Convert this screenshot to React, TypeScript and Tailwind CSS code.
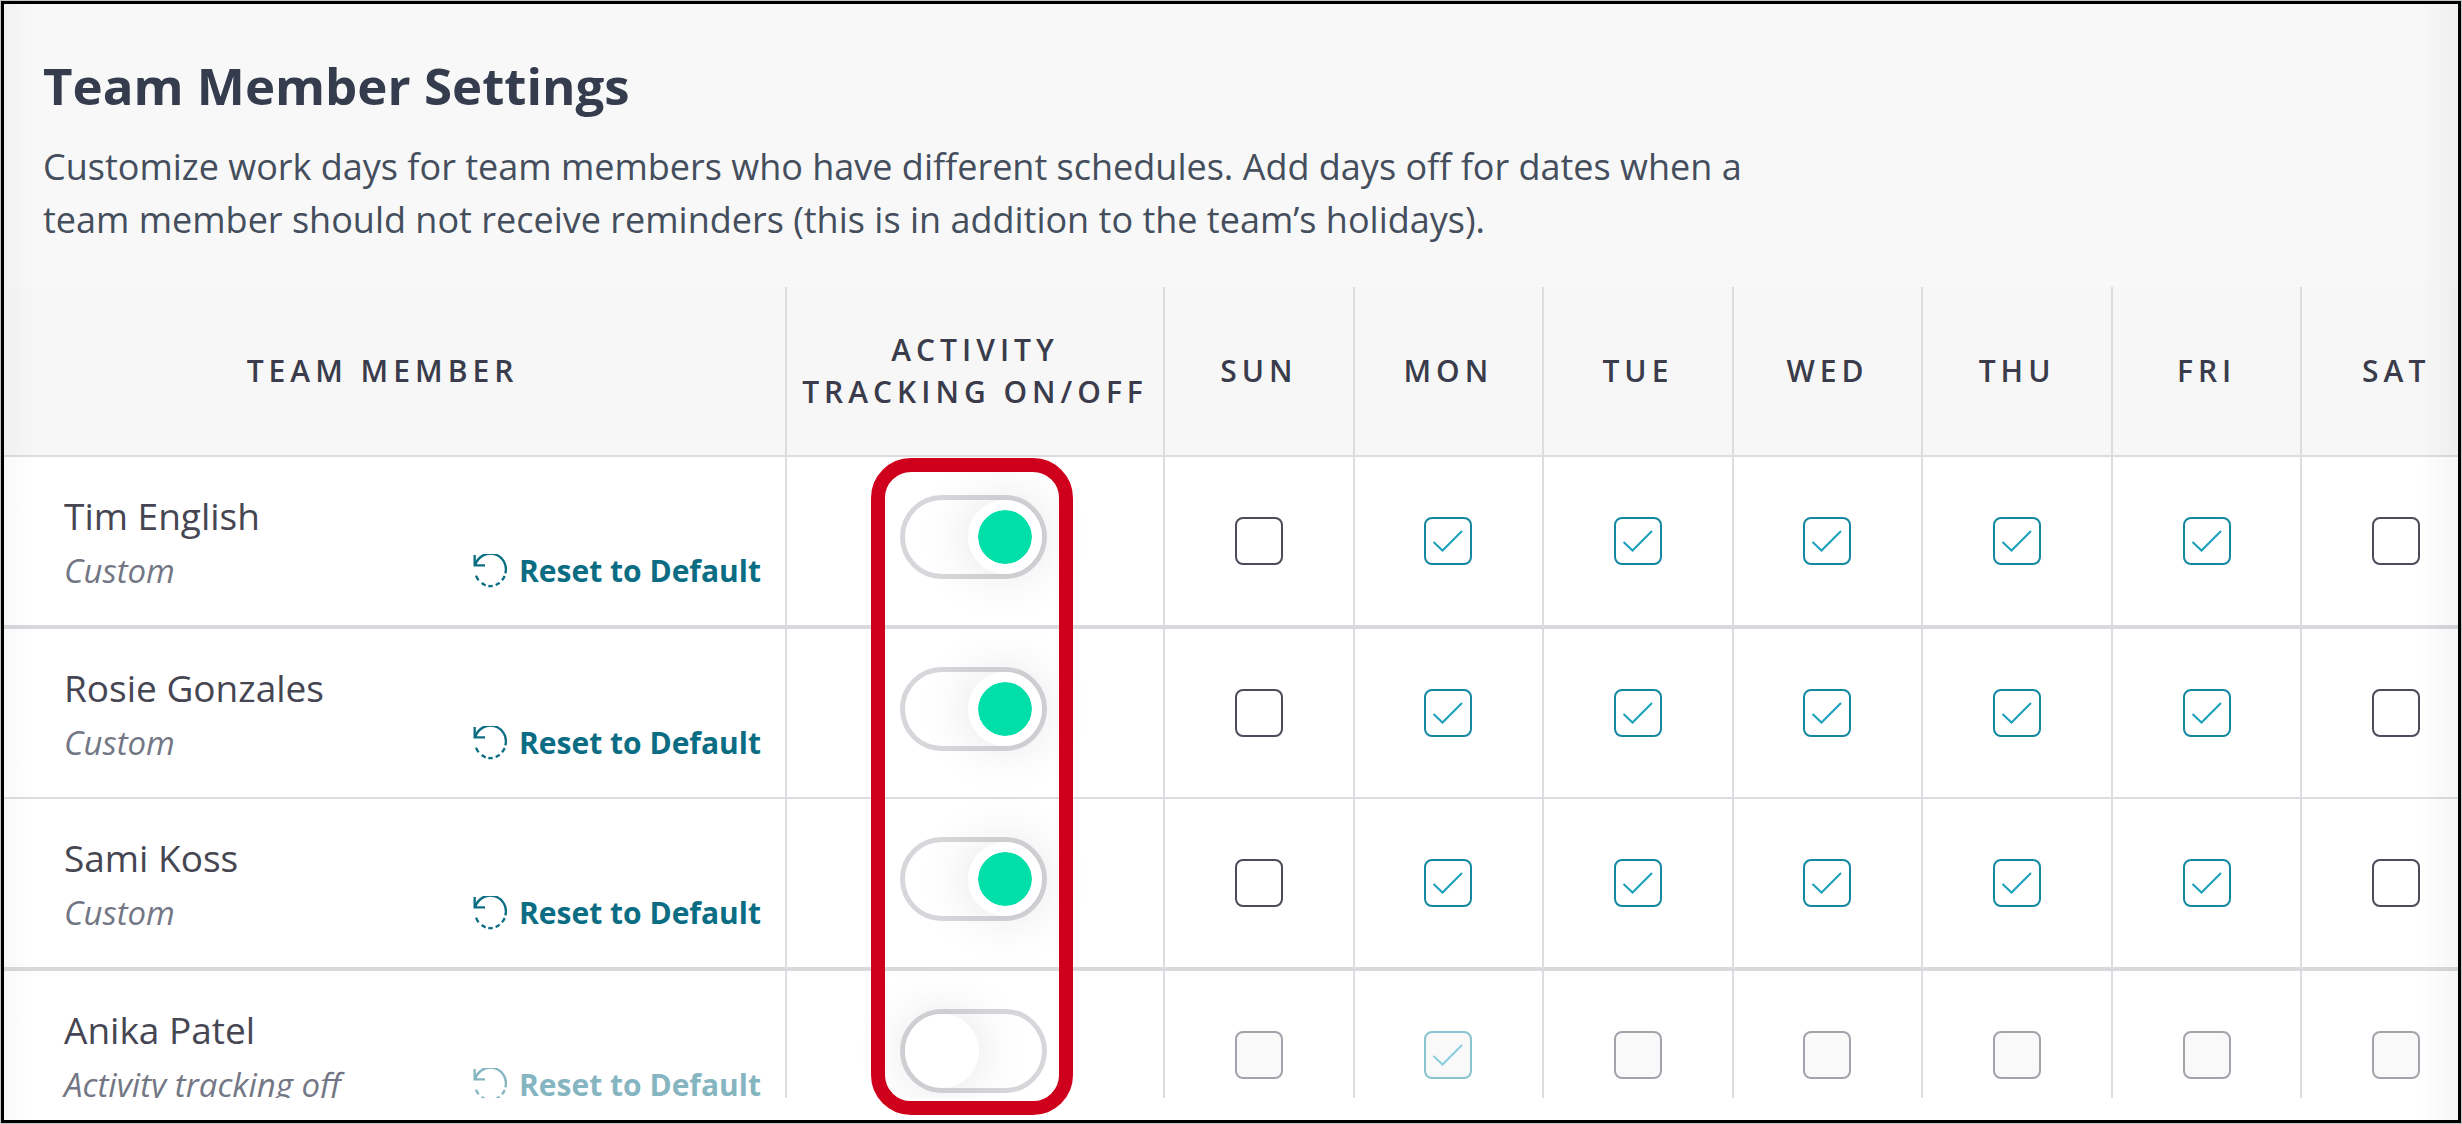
import { useState } from "react"

const days = ["Sun", "Mon", "Tue", "Wed", "Thu", "Fri", "Sat"]

interface Member {
  name: string
  tracking: boolean
  workDays: string[]
}

const initialMembers: Member[] = [
  { name: "Tim English", tracking: true, workDays: ["Mon", "Tue", "Wed", "Thu", "Fri"] },
  { name: "Rosie Gonzales", tracking: true, workDays: ["Mon", "Tue", "Wed", "Thu", "Fri"] },
  { name: "Sami Koss", tracking: true, workDays: ["Mon", "Tue", "Wed", "Thu", "Fri"] },
  { name: "Anika Patel", tracking: false, workDays: ["Mon"] },
]

function ResetIcon() {
  return (
    <svg className="size-[34px] flex-shrink-0" viewBox="64 40 100 102" fill="none" stroke="currentColor" strokeWidth="7" aria-hidden="true">
      <path d="M68 43V74H99" />
      <path d="M70 73A45 45 0 0 1 160 98" />
      <path d="M72 105Q75 113 80 119M89 127Q94 131 101 134M109 136Q115 137 122 136M131 133Q137 130 143 126M150 119Q155 113 158 106" />
    </svg>
  )
}

// Toggle on/off
function Toggle({ label, active, onChange }: { label: string; active: boolean; onChange: (v: boolean) => void }) {
  return (
    <input
      type="checkbox"
      role="switch"
      aria-label={label}
      checked={active}
      onChange={(e) => onChange(e.target.checked)}
      className="mb-2 inline-flex h-[84px] w-[147px] cursor-pointer appearance-none rounded-full border-[5px] border-[#d5d7da] align-middle before:size-[74px] before:rounded-full before:border-[10px] before:border-white before:bg-white before:bg-clip-padding before:shadow-[0_0_56px_rgba(0,0,0,0.12)] before:content-[''] checked:justify-end checked:before:bg-[#00dfa9]"
    />
  )
}

function DayBox({ label, checked, disabled, onChange }: { label: string; checked: boolean; disabled: boolean; onChange: () => void }) {
  return (
    <span className={`inline-grid align-middle ${disabled ? "opacity-50" : ""}`}>
      <input
        type="checkbox"
        aria-label={label}
        checked={checked}
        disabled={disabled}
        onChange={onChange}
        className="peer size-12 appearance-none rounded-lg border-2 border-[#4a4c5a] bg-white [grid-area:1/1] checked:border-[#1488a1] disabled:bg-[#f4f4f4]"
      />
      <svg className="pointer-events-none invisible size-12 text-[#1a9fbd] [grid-area:1/1] peer-checked:visible" viewBox="0 0 48 48" fill="none" stroke="currentColor" strokeWidth="2" aria-hidden="true">
        <path d="M9.5 25L18.5 33.5L38 14" />
      </svg>
    </span>
  )
}

export default function App() {
  const [members, setMembers] = useState(initialMembers)

  const update = (name: string, change: Partial<Member>) =>
    setMembers(members.map((m) => (m.name === name ? { ...m, ...change } : m)))

  const toggleDay = (m: Member, day: string) =>
    update(m.name, {
      workDays: m.workDays.includes(day) ? m.workDays.filter((d) => d !== day) : [...m.workDays, day],
    })

  return (
    <div className="bg-[#c4c8c6] p-px font-['Open_Sans',sans-serif]">
      <main className="relative overflow-hidden border-[3px] border-black bg-white pb-[22px]">
        <header className="bg-[#f8f8f8] px-[39px] pt-[45px] pb-[41px]">
          <h1 className="text-[51px] leading-[72px] font-bold text-[#353c4e]">Team Member Settings</h1>
          <p className="mt-[19px] max-w-[1760px] text-[36px] leading-[53px] text-[#444e5c]">
            Customize work days for team members who have different schedules. Add days off for dates when a team member
            should not receive reminders (this is in addition to the team’s holidays).
          </p>
        </header>

        <div className="max-h-[811px] overflow-hidden">
          <div className="-mr-[34px]">
            <table className="w-full table-fixed border-separate border-spacing-0">
              <colgroup>
                <col className="w-[783px]" />
                <col className="w-[378px]" />
                {days.map((day) => (
                  <col key={day} />
                ))}
              </colgroup>
              <thead>
                <tr className="h-[170px] bg-[#f7f7f7] text-[30px] leading-[42px] tracking-[5px] text-[#3a3c4b] uppercase">
                  <th className="border-r-2 border-b-2 border-[#dcdde0] pr-6 font-semibold">Team Member</th>
                  <th className="border-r-2 border-b-2 border-[#dcdde0] font-semibold">
                    Activity
                    <br />
                    Tracking on/off
                  </th>
                  {days.map((day) => (
                    <th key={day} className="border-r-2 border-b-2 border-[#dcdde0] font-semibold">
                      {day}
                    </th>
                  ))}
                </tr>
              </thead>
              <tbody>
                {members.map((m, i) => {
                  const border = i % 2 === 0 ? "border-r-2 border-b-4 border-r-[#dcdde0] border-b-[#d8d9dc]" : "border-r-2 border-b-2 border-[#dcdde0]"
                  return (
                    <tr key={m.name}>
                      <td className={`${border} pt-[35px] pr-6 pb-[23px] pl-[60px]`}>
                        <div className="text-[37px] leading-[48px] text-[#454652]">{m.name}</div>
                        <div className="flex items-center justify-between leading-[62px]">
                          <span className="text-[33px] text-[#737785] italic">{m.tracking ? "Custom" : "Activity tracking off"}</span>
                          <button
                            disabled={!m.tracking}
                            onClick={() => update(m.name, { workDays: ["Mon", "Tue", "Wed", "Thu", "Fri"] })}
                            className="flex items-center gap-3 text-[30px] font-bold text-[#0b6d83] disabled:opacity-50"
                          >
                            <ResetIcon />
                            Reset to Default
                          </button>
                        </div>
                      </td>
                      <td className={`${border} pr-1 text-center`}>
                        <Toggle
                          label={`Activity tracking for ${m.name}`}
                          active={m.tracking}
                          onChange={(v) => update(m.name, { tracking: v })}
                        />
                      </td>
                      {days.map((day) => (
                        <td key={day} className={`${border} text-center`}>
                          <DayBox
                            label={`${m.name} ${day}`}
                            checked={m.workDays.includes(day)}
                            disabled={!m.tracking}
                            onChange={() => toggleDay(m, day)}
                          />
                        </td>
                      ))}
                    </tr>
                  )
                })}
              </tbody>
            </table>
          </div>
        </div>

        {/* Edge fades */}
        <div className="pointer-events-none absolute inset-y-0 left-0 w-8 bg-gradient-to-r from-black/[0.025] to-transparent" />
        <div className="pointer-events-none absolute inset-y-0 right-0 w-10 bg-gradient-to-l from-black/[0.035] to-transparent" />

        {/* Highlight around the tracking toggles */}
        <div className="pointer-events-none absolute top-[454px] left-[867px] h-[657px] w-[202px] rounded-[40px] border-[14px] border-[#cf001c]" />
      </main>
    </div>
  )
}
